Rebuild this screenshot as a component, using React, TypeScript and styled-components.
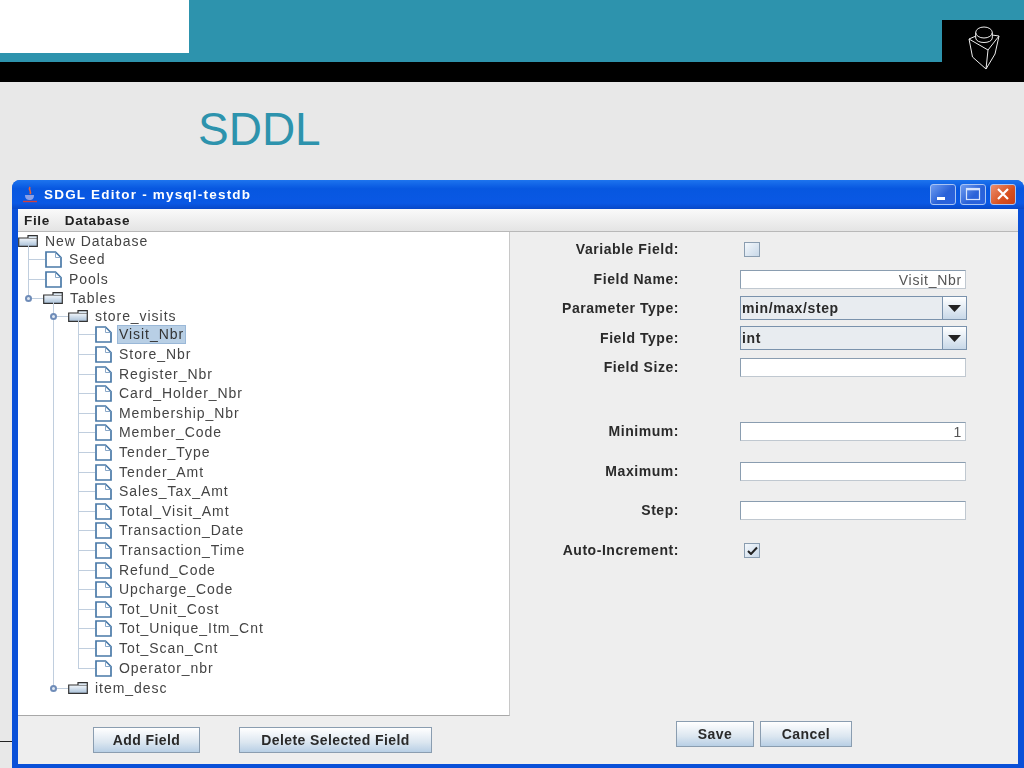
import {FC} from 'react'
import styled, {createGlobalStyle} from 'styled-components'

const Global = createGlobalStyle`
  html, body {
    margin: 0;
    padding: 0;
    background: #e8e8e8;
    overflow: hidden;
  }
  * {
    box-sizing: border-box;
  }
`

const Page = styled.div`
  width: 1024px;
  height: 768px;
  display: flex;
  flex-direction: column;
  font-family: "Liberation Sans", Arial, sans-serif;
`

const Header = styled.header`
  display: flex;
  height: 82px;
  flex: none;
`

const Band = styled.div`
  flex: 1;
  background: #2d93ad;
  border-bottom: 20px solid #000;
`

const LogoBlock = styled.div`
  width: 189px;
  height: 53px;
  background: #fff;
`

const Notch = styled.div`
  width: 82px;
  background: #000;
  border-top: 20px solid #2d93ad;
  padding: 6px 0 0 26px;
`

const Title = styled.h1`
  margin: 0;
  padding: 20px 0 0 198px;
  height: 98px;
  flex: none;
  font-size: 46px;
  line-height: 54px;
  font-weight: normal;
  color: #2d93ad;
`

const Win = styled.div`
  position: relative;
  margin-left: 12px;
  width: 1012px;
  height: 588px;
  display: flex;
  flex-direction: column;
  background: #0a50d8;
  border-radius: 8px 8px 0 0;
  padding: 0 6px 4px;
  filter: blur(0.4px);

  &::before {
    content: '';
    position: absolute;
    left: -12px;
    top: 561px;
    width: 12px;
    height: 1px;
    background: #222;
  }
`

const TitleBar = styled.div`
  height: 29px;
  flex: none;
  margin: 0 -6px;
  padding: 0 8px 0 10px;
  display: flex;
  align-items: center;
  background: linear-gradient(#1d74ee, #0757e0 30%, #0a58e4 80%, #0848c8);
  border-radius: 8px 8px 0 0;
`

const WinTitle = styled.span`
  flex: 1;
  margin-left: 6px;
  color: #fff;
  font-size: 13.5px;
  font-weight: bold;
  letter-spacing: 1.2px;
`

const WinButtons = styled.div`
  display: flex;
  gap: 4px;
  margin-top: -1px;
`

const WinButton = styled.div<{$close?: boolean}>`
  width: 26px;
  height: 21px;
  display: flex;
  align-items: center;
  justify-content: center;
  border: 1px solid #a8c4f4;
  border-radius: 3px;
  background: ${({$close}) => $close
    ? 'linear-gradient(135deg, #ec9070, #d8501f 60%, #c84018)'
    : 'linear-gradient(135deg, #6f9cf0, #2a62d8 55%, #2a62e0)'};
`

const MenuBar = styled.div`
  height: 23px;
  flex: none;
  display: flex;
  gap: 15px;
  align-items: center;
  padding-left: 6px;
  background: linear-gradient(#fafafa, #e4e4e4);
  border-bottom: 1px solid #b8b8b8;
  font-size: 13.5px;
  font-weight: bold;
  letter-spacing: 0.65px;
  color: #222;
`

const Body = styled.div`
  flex: 1;
  display: flex;
  background: #eeeeee;
  min-height: 0;
`

const LeftPane = styled.div`
  width: 492px;
  flex: none;
  display: flex;
  flex-direction: column;
`

const Tree = styled.div`
  height: 484px;
  flex: none;
  background: #fff;
  border-right: 1px solid #c8c8c8;
  border-bottom: 1px solid #a8a8a8;
  overflow: hidden;
`

const Branch = styled.div<{$shift: number}>`
  position: relative;
  margin-left: ${({$shift}) => $shift}px;

  &::before {
    content: '';
    position: absolute;
    left: 0;
    top: -6px;
    bottom: 9px;
    width: 1px;
    background: #c0cede;
  }
`

const Row = styled.div<{$folder?: boolean, $gap?: number}>`
  position: relative;
  height: ${({$folder}) => $folder ? 18 : 19.6}px;
  margin-top: ${({$gap}) => $gap || 0}px;
  display: flex;
  align-items: center;
  font-size: 14px;
  letter-spacing: 0.95px;
  color: #444;
`

const Stub = styled.span<{$width: number}>`
  width: ${({$width}) => $width}px;
  height: 1px;
  flex: none;
  background: #c0cede;
`

const Handle = styled.span`
  position: absolute;
  left: -3px;
  top: 6px;
  width: 7px;
  height: 7px;
  border-radius: 50%;
  background: #dfe8f2;
  border: 2px solid #6f8cb8;
`

const Label = styled.span<{$selected?: boolean}>`
  margin-left: 5px;
  padding: 0 1px;
  line-height: 17px;
  background: ${({$selected}) => $selected ? '#b8cfe5' : 'transparent'};
  border: 1px solid ${({$selected}) => $selected ? '#9ab8d8' : 'transparent'};
  color: ${({$selected}) => $selected ? '#333' : 'inherit'};
`

const LeftFooter = styled.div`
  flex: 1;
  display: flex;
  gap: 39px;
  padding: 11px 0 0 75px;
`

const Btn = styled.button<{$width: number}>`
  width: ${({$width}) => $width}px;
  height: 26px;
  padding: 0;
  border: 1px solid #8a9db0;
  background: linear-gradient(#fff, #dbe6f0 60%, #b8cfe5);
  font-family: inherit;
  font-size: 14px;
  font-weight: bold;
  letter-spacing: 0.4px;
  color: #2a2a2a;
`

const RightPane = styled.div`
  flex: 1;
  display: flex;
  flex-direction: column;
  padding-top: 7px;
`

const FormRow = styled.div<{$gap: number}>`
  display: grid;
  grid-template-columns: 169px 226px;
  grid-template-rows: 20px;
  column-gap: 61px;
  align-items: center;
  margin-top: ${({$gap}) => $gap}px;
`

const FieldLabel = styled.label`
  text-align: right;
  font-size: 14px;
  font-weight: bold;
  letter-spacing: 0.55px;
  color: #2a2a2a;
`

const Input = styled.div`
  height: 19px;
  background: #fff;
  border: 1px solid #8a9db0;
  border-bottom-color: #c0c8d0;
  border-right-color: #c0c8d0;
  padding: 0 3px;
  font-size: 14px;
  line-height: 18px;
  letter-spacing: 0.75px;
  text-align: right;
  color: #555;
`

const Select = styled.div`
  height: 24px;
  width: 227px;
  display: flex;
  border: 1px solid #7a92ac;
  background: #e8ecf0;
`

const SelectValue = styled.span`
  flex: 1;
  padding-left: 1px;
  font-size: 14px;
  font-weight: bold;
  letter-spacing: 0.6px;
  line-height: 22px;
  color: #2a2a2a;
`

const SelectArrow = styled.span`
  width: 24px;
  display: flex;
  align-items: center;
  justify-content: center;
  border-left: 1px solid #7a92ac;
  background: linear-gradient(#fff, #c8d8e8);
`

const Check = styled.span`
  width: 16px;
  height: 15px;
  margin-left: 4px;
  display: flex;
  align-items: center;
  justify-content: center;
  border: 1px solid #8a9db0;
  background: linear-gradient(135deg, #f4f8fc, #c8d8e8);
`

const RightFooter = styled.div`
  margin-top: auto;
  display: flex;
  gap: 6px;
  padding: 0 0 17px 166px;
`

const Cube = () => (
  <svg width="33" height="46" viewBox="0 0 33 46" fill="none" stroke="#ececec" strokeWidth="1">
    <path d="M1 13 L8 10 M24 9 L31 10 L20 24 L1 13 L4.5 31 L18 43 L27 28 L31 10 M20 24 L18 43" />
    <ellipse cx="16" cy="6.5" rx="8.3" ry="5.5" />
    <path d="M7.7 6.5 V12 C8 18 24 18 24.3 12 V6.5" />
  </svg>
)

const JavaCup = () => (
  <svg width="16" height="18" viewBox="0 0 16 18" fill="none">
    <path d="M8 1 C6 4 10 5 8 8" stroke="#e8603a" strokeWidth="1.6" />
    <path d="M3 9 H12 C12 13 10 14 8 14 C5 14 3 13 3 9 Z" fill="#8aa0e8" />
    <path d="M1 15.5 H15" stroke="#d04040" strokeWidth="1.4" />
  </svg>
)

const DocIcon = () => (
  <svg width="17" height="17" viewBox="0 0 17 17" fill="none" style={{flex: 'none'}}>
    <path d="M1 1 H10.5 L16 6.5 V16 H1 Z" fill="#fff" stroke="#4a7aa8" strokeWidth="1.7" />
    <path d="M10.5 1.5 V6.5 H15.5" stroke="#8aa8c8" strokeWidth="1" />
  </svg>
)

const FolderIcon = () => (
  <svg width="20" height="12" viewBox="0 0 20 12" fill="none" style={{flex: 'none'}}>
    <defs>
      <linearGradient id="fold" x1="0" y1="0" x2="0" y2="1">
        <stop offset="0" stopColor="#f4f8fc" />
        <stop offset="1" stopColor="#a8c0d8" />
      </linearGradient>
    </defs>
    <path d="M.7 3 H19.3 V11.3 H.7 Z" fill="url(#fold)" stroke="#333" strokeWidth="1.2" />
    <path d="M10 3 V.7 H19.3 V3" fill="#dde8f2" stroke="#333" strokeWidth="1.2" />
  </svg>
)

const Arrow = () => (
  <svg width="13" height="7" viewBox="0 0 13 7"><path d="M0 0 H13 L6.5 7 Z" fill="#222" /></svg>
)

const fields = [
  'Store_Nbr', 'Register_Nbr', 'Card_Holder_Nbr', 'Membership_Nbr', 'Member_Code',
  'Tender_Type', 'Tender_Amt', 'Sales_Tax_Amt', 'Total_Visit_Amt', 'Transaction_Date',
  'Transaction_Time', 'Refund_Code', 'Upcharge_Code', 'Tot_Unit_Cost', 'Tot_Unique_Itm_Cnt',
  'Tot_Scan_Cnt', 'Operator_nbr',
]

const Leaf: FC<{name: string, selected?: boolean}> = ({name, selected}) => (
  <Row>
    <Stub $width={17} />
    <DocIcon />
    <Label $selected={selected}>{name}</Label>
  </Row>
)

const FolderRow: FC<{name: string, gap?: number}> = ({name, gap}) => (
  <Row $folder $gap={gap}>
    <Handle />
    <Stub $width={15} />
    <FolderIcon />
    <Label>{name}</Label>
  </Row>
)

const Field: FC<{label: string, gap: number, children?: any}> = ({label, gap, children}) => (
  <FormRow $gap={gap}>
    <FieldLabel>{label}</FieldLabel>
    {children}
  </FormRow>
)

export default function App() {
  return (
    <Page>
      <Global />
      <Header>
        <Band><LogoBlock /></Band>
        <Notch><Cube /></Notch>
      </Header>
      <Title>SDDL</Title>
      <Win>
        <TitleBar>
          <JavaCup />
          <WinTitle>SDGL Editor - mysql-testdb</WinTitle>
          <WinButtons>
            <WinButton>
              <svg width="16" height="14" viewBox="0 0 16 14"><rect x="2" y="10" width="8" height="3" fill="#fff" /></svg>
            </WinButton>
            <WinButton>
              <svg width="16" height="14" viewBox="0 0 16 14" fill="none"><rect x="1.5" y="1.5" width="13" height="11" stroke="#d8e4fc" strokeWidth="1.2" /><path d="M1 2.5 H15" stroke="#d8e4fc" strokeWidth="1.6" /></svg>
            </WinButton>
            <WinButton $close>
              <svg width="14" height="14" viewBox="0 0 14 14"><path d="M2 2 L12 12 M12 2 L2 12" stroke="#fff" strokeWidth="2.2" /></svg>
            </WinButton>
          </WinButtons>
        </TitleBar>
        <MenuBar>
          <span>File</span>
          <span>Database</span>
        </MenuBar>
        <Body>
          <LeftPane>
            <Tree>
              <Row $folder>
                <FolderIcon />
                <Label>New Database</Label>
              </Row>
              <Branch $shift={10}>
                <Leaf name="Seed" />
                <Leaf name="Pools" />
                <FolderRow name="Tables" />
              </Branch>
              <Branch $shift={35}>
                <FolderRow name="store_visits" />
                <Branch $shift={25}>
                  <Leaf name="Visit_Nbr" selected />
                  {fields.map(f => <Leaf key={f} name={f} />)}
                </Branch>
                <FolderRow name="item_desc" gap={1.5} />
              </Branch>
            </Tree>
            <LeftFooter>
              <Btn $width={107}>Add Field</Btn>
              <Btn $width={193}>Delete Selected Field</Btn>
            </LeftFooter>
          </LeftPane>
          <RightPane>
            <Field label="Variable Field:" gap={0}><Check /></Field>
            <Field label="Field Name:" gap={10}><Input>Visit_Nbr</Input></Field>
            <Field label="Parameter Type:" gap={9}>
              <Select><SelectValue>min/max/step</SelectValue><SelectArrow><Arrow /></SelectArrow></Select>
            </Field>
            <Field label="Field Type:" gap={10}>
              <Select><SelectValue>int</SelectValue><SelectArrow><Arrow /></SelectArrow></Select>
            </Field>
            <Field label="Field Size:" gap={9}><Input /></Field>
            <Field label="Minimum:" gap={44}><Input>1</Input></Field>
            <Field label="Maximum:" gap={20}><Input /></Field>
            <Field label="Step:" gap={19}><Input /></Field>
            <Field label="Auto-Increment:" gap={20}>
              <Check>
                <svg width="11" height="9" viewBox="0 0 11 9" fill="none"><path d="M1 5 L4 8 L10 1.5" stroke="#222" strokeWidth="2" /></svg>
              </Check>
            </Field>
            <RightFooter>
              <Btn $width={78}>Save</Btn>
              <Btn $width={92}>Cancel</Btn>
            </RightFooter>
          </RightPane>
        </Body>
      </Win>
    </Page>
  )
}
